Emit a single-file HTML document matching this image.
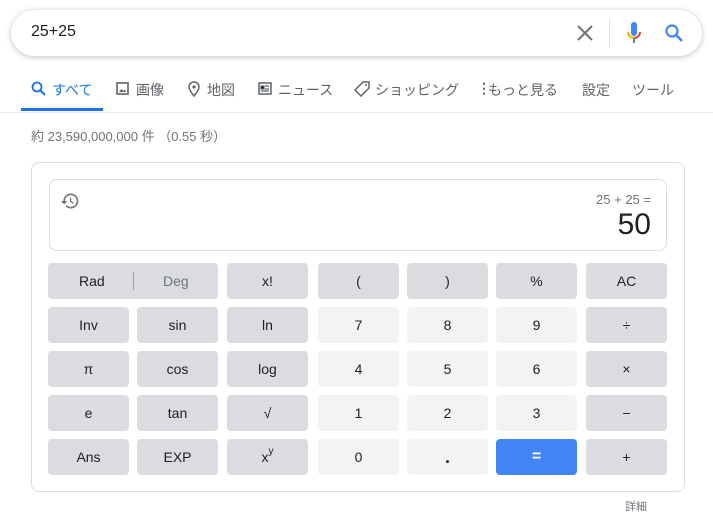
<!DOCTYPE html><html><head><meta charset="utf-8"><style>
body{margin:0;width:713px;height:520px;background:#fff;font-family:"Liberation Sans","Noto Sans CJK JP",sans-serif;position:relative;overflow:hidden}
.a{position:absolute}
.sb{left:11px;top:10px;width:691px;height:46px;border-radius:24px;box-shadow:0 1px 6px rgba(32,33,36,.28);background:#fff}
.tab{top:80px;font-size:14px;color:#5f6368;white-space:nowrap}
.b{position:absolute;height:36px;border-radius:4px;background:#dadce0;color:#202124;font-size:14px;display:flex;align-items:center;justify-content:center}
.l{background:#f1f3f4}
</style></head><body>
<div class="a sb"></div>
<div class="a" style="left:31px;top:23px;font-size:16px;color:#202124">25+25</div>
<svg class="a" style="left:576px;top:24px" width="18" height="18" viewBox="0 0 18 18"><path d="M2 2L16 16M16 2L2 16" stroke="#70757a" stroke-width="2"/></svg>
<div class="a" style="left:609px;top:19px;width:1px;height:28px;background:#dfe1e5"></div>
<svg class="a" style="left:625px;top:21px" width="18" height="26" viewBox="0 0 18 26"><rect x="6" y="1" width="6" height="14" rx="3" fill="#4285f4"/><path d="M3 11a6 6 0 0 0 12 0" stroke="#ea4335" stroke-width="2" fill="none"/><path d="M3 11a6 6 0 0 0 6 6" stroke="#fbbc05" stroke-width="2" fill="none"/><rect x="8" y="17" width="2" height="5" fill="#34a853"/></svg>
<svg class="a" style="left:664px;top:23px" width="20" height="20" viewBox="0 0 20 20"><circle cx="8" cy="8" r="5.5" stroke="#4285f4" stroke-width="2.2" fill="none"/><path d="M12 12L18 18" stroke="#4285f4" stroke-width="2.5"/></svg>
<svg class="a" style="left:31px;top:81px" width="15" height="15" viewBox="0 0 15 15"><circle cx="6" cy="6" r="4.5" stroke="#1a73e8" stroke-width="1.8" fill="none"/><path d="M9.5 9.5L14 14" stroke="#1a73e8" stroke-width="2"/></svg>
<div class="a tab" style="left:52px;color:#1a73e8">すべて</div>
<div class="a" style="left:21px;top:108px;width:82px;height:3px;background:#1a73e8"></div>
<svg class="a" style="left:116px;top:82px" width="13" height="13" viewBox="0 0 13 13"><rect x="1" y="1" width="11" height="11" stroke="#5f6368" stroke-width="1.6" fill="none"/><path d="M3 10l2.5-3 2 2 1.5-1.5L10 10z" fill="#5f6368"/></svg>
<div class="a tab" style="left:136px">画像</div>
<svg class="a" style="left:188px;top:81px" width="12" height="16" viewBox="0 0 12 16"><path d="M6 15C2 10 1 8 1 6a5 5 0 0 1 10 0c0 2-1 4-5 9z" stroke="#5f6368" stroke-width="1.5" fill="none"/><circle cx="6" cy="6" r="1.6" fill="#5f6368"/></svg>
<div class="a tab" style="left:207px">地図</div>
<svg class="a" style="left:258px;top:82px" width="14" height="13" viewBox="0 0 14 13"><rect x="1" y="1" width="12" height="11" stroke="#5f6368" stroke-width="1.5" fill="none"/><path d="M3 4h3v3H3zM7 4h4M7 7h4M3 9h8" stroke="#5f6368" stroke-width="1.2"/></svg>
<div class="a tab" style="left:278px">ニュース</div>
<svg class="a" style="left:354px;top:81px" width="16" height="16" viewBox="0 0 16 16"><path d="M9 1h6v6l-8 8-6-6z" stroke="#5f6368" stroke-width="1.5" fill="none"/><circle cx="12" cy="4" r="1" fill="#5f6368"/></svg>
<div class="a tab" style="left:375px">ショッピング</div>
<div class="a tab" style="left:477px;font-weight:bold">⋮</div>
<div class="a tab" style="left:488px">もっと見る</div>
<div class="a tab" style="left:582px">設定</div>
<div class="a tab" style="left:632px">ツール</div>
<div class="a" style="left:0;top:112px;width:713px;height:1px;background:#ebebeb"></div>
<div class="a" style="left:31px;top:126px;font-size:13px;color:#70757a">約 23,590,000,000 件 （0.55 秒）</div>
<div class="a" style="left:31px;top:162px;width:652px;height:328px;border:1px solid #dadce0;border-radius:8px"></div>
<div class="a" style="left:49px;top:179px;width:616px;height:70px;border:1px solid #dadce0;border-radius:8px"></div>
<svg class="a" style="left:60px;top:191px" width="20" height="20" viewBox="0 0 24 24"><path d="M13 3a9 9 0 0 0-9 9H1l4 4 4-4H6a7 7 0 1 1 2 4.9l-1.4 1.4A9 9 0 1 0 13 3zm-1 5v5l4.3 2.5.7-1.2-3.5-2.1V8z" fill="#70757a"/></svg>
<div class="a" style="right:62px;top:192px;font-size:13px;color:#70757a">25 + 25 =</div>
<div class="a" style="right:62px;top:208px;font-size:30px;color:#202124">50</div>
<div class="b" style="left:48px;top:263px;width:170px"><span style="position:absolute;left:31px">Rad</span><span style="position:absolute;left:85px;top:9px;width:1px;height:18px;background:#9aa0a6"></span><span style="position:absolute;left:115px;color:#70757a">Deg</span></div>
<div class="b" style="left:227px;top:263px;width:81px">x!</div>
<div class="b" style="left:318px;top:263px;width:81px">(</div>
<div class="b" style="left:407px;top:263px;width:81px">)</div>
<div class="b" style="left:496px;top:263px;width:81px">%</div>
<div class="b" style="left:586px;top:263px;width:81px">AC</div>

<div class="b" style="left:48px;top:307px;width:81px">Inv</div>
<div class="b" style="left:137px;top:307px;width:81px">sin</div>
<div class="b" style="left:227px;top:307px;width:81px">ln</div>
<div class="b l" style="left:318px;top:307px;width:81px">7</div>
<div class="b l" style="left:407px;top:307px;width:81px">8</div>
<div class="b l" style="left:496px;top:307px;width:81px">9</div>
<div class="b" style="left:586px;top:307px;width:81px">÷</div>

<div class="b" style="left:48px;top:351px;width:81px">π</div>
<div class="b" style="left:137px;top:351px;width:81px">cos</div>
<div class="b" style="left:227px;top:351px;width:81px">log</div>
<div class="b l" style="left:318px;top:351px;width:81px">4</div>
<div class="b l" style="left:407px;top:351px;width:81px">5</div>
<div class="b l" style="left:496px;top:351px;width:81px">6</div>
<div class="b" style="left:586px;top:351px;width:81px">×</div>

<div class="b" style="left:48px;top:395px;width:81px">e</div>
<div class="b" style="left:137px;top:395px;width:81px">tan</div>
<div class="b" style="left:227px;top:395px;width:81px">√</div>
<div class="b l" style="left:318px;top:395px;width:81px">1</div>
<div class="b l" style="left:407px;top:395px;width:81px">2</div>
<div class="b l" style="left:496px;top:395px;width:81px">3</div>
<div class="b" style="left:586px;top:395px;width:81px">−</div>

<div class="b" style="left:48px;top:439px;width:81px">Ans</div>
<div class="b" style="left:137px;top:439px;width:81px">EXP</div>
<div class="b" style="left:227px;top:439px;width:81px"><span>x</span><span style="font-size:10px;position:relative;top:-6px">y</span></div>
<div class="b l" style="left:318px;top:439px;width:81px">0</div>
<div class="b l" style="left:407px;top:439px;width:81px;font-weight:bold;font-size:18px">.</div>
<div class="b" style="left:496px;top:439px;width:81px;background:#4285f4;color:#fff;font-size:16px;font-weight:bold">=</div>
<div class="b" style="left:586px;top:439px;width:81px">+</div>
<div class="a" style="left:625px;top:498px;font-size:11px;color:#70757a">詳細</div>
</body></html>
